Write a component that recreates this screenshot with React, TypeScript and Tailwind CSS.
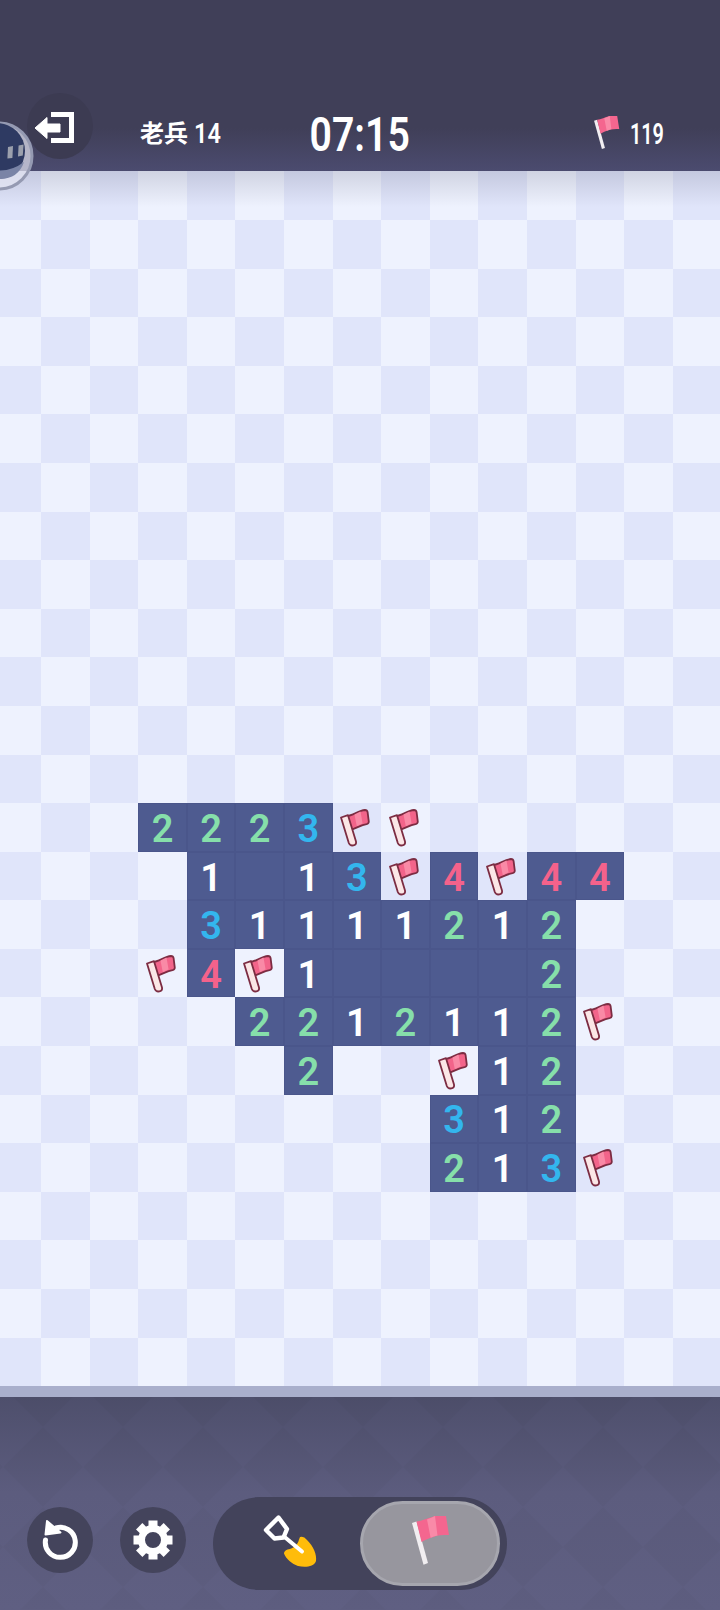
import React from 'react';

const BOARD: Record<number, string> = {
  13: '...2223FF......',
  14: '....1013F4F44..',
  15: '....31111212...',
  16: '...F4F100002...',
  17: '.....2212112F..',
  18: '......2..F12...',
  19: '.........312...',
  20: '.........213F..',
};

const DIGIT_COLORS: Record<string, string> = {
  '1': 'text-white',
  '2': 'text-[#86dfaa]',
  '3': 'text-[#33b6ee]',
  '4': 'text-[#f4628b]',
};

// flag with dark outline, sits on the board cells
function BoardFlag() {
  return (
    <svg className="mr-[3px]" width="30" height="39" viewBox="0 0 30 39" fill="none">
      <path d="M6.5 8 C13 8 18 2.5 25 2 Q27.2 2 27.6 4.2 L28.8 13.6 Q28.8 15.8 26.6 16.2 C21 16.8 17 20 11.5 21.6 Z" fill="#f2648a" stroke="#7c2c42" strokeWidth="1.8" strokeLinejoin="round" />
      <path d="M14.5 6.6 C16.5 5.6 18.5 4.4 20.5 3.6 L22.6 15.4 C20.6 16 18.6 17.2 16.8 18.2 Z" fill="#f98aa6" />
      <path d="M1 9.5 L8 7.2 L16 33.5 Q16.6 36.8 13.4 37.4 Q10 38 8.8 35 Z" fill="#fbe6e6" stroke="#7c2c42" strokeWidth="1.8" strokeLinejoin="round" />
    </svg>
  );
}

// flag without outline, used in the header and in the toggle
function PlainFlag({ width, height }: { width: number; height: number }) {
  return (
    <svg width={width} height={height} viewBox="0 0 38 50" fill="none">
      <path d="M0 7 L4.5 5.5 L16 47 L11.5 48.7 Z" fill="#f1eef1" />
      <path d="M4.5 5.5 C10 5 16 2 23 0 L34 0 L37 19 C31 19 26 19 21 21 C17 22 13 24 9.5 26 Z" fill="#f4668f" />
      <path d="M15 3.4 C18 2.4 21 1 23 0 L25.5 19.4 C23 19.8 20.5 21 18.6 21.8 Z" fill="#f98aa8" />
    </svg>
  );
}

function ExitIcon() {
  return (
    <svg width="66" height="66" viewBox="0 0 66 66" fill="none">
      <path d="M24 21.5 H44.5 V47.5 H24" stroke="#fff" strokeWidth="5" />
      <path d="M8 35 L20 24.5 V31 H33 V39 H20 V45.5 Z" fill="#fff" stroke="#fff" strokeWidth="1" strokeLinejoin="round" />
    </svg>
  );
}

function UndoIcon() {
  return (
    <svg width="66" height="66" viewBox="0 0 66 66" fill="none">
      <path d="M29 21 A 15 15 0 1 1 18.5 33" stroke="#fff" strokeWidth="5" strokeLinecap="round" />
      <path d="M20 14 L18.5 27.5 L33.5 25.5 Z" fill="#fff" stroke="#fff" strokeWidth="2" strokeLinejoin="round" />
    </svg>
  );
}

function GearIcon() {
  return (
    <svg width="66" height="66" viewBox="0 0 66 66" fill="none">
      <circle cx="33" cy="33" r="11.5" stroke="#fff" strokeWidth="7" />
      {[0, 45, 90, 135, 180, 225, 270, 315].map((deg) => (
        <rect key={deg} x="28.5" y="13.5" width="9" height="8" fill="#fff" transform={`rotate(${deg} 33 33)`} />
      ))}
    </svg>
  );
}

function ShovelIcon() {
  return (
    <svg width="80" height="70" viewBox="0 0 80 70" fill="none">
      <path d="M47 32 Q50.5 30.5 54 35 C60.5 41 64 50 63 56 C61 62 52 62.5 45 61 C39 59 33 54 31 48.5 Q31 46 34.5 44.5 C41 43.5 45 39.5 46 34.5 Z" fill="#ffbc0a" />
      <path d="M13 25 L25.5 12.5 L34 24 L30.5 32.5 L21.5 33.5 Z" stroke="#fff" strokeWidth="4.4" strokeLinejoin="round" />
      <path d="M31 31.5 L49 46.5" stroke="#fff" strokeWidth="4" strokeLinecap="round" />
    </svg>
  );
}

function FloatingBall() {
  return (
    <svg className="absolute left-0 top-[118px]" width="40" height="76" viewBox="0 0 40 76" fill="none">
      <circle cx="-1" cy="38" r="33" fill="#e4e6f2" fillOpacity="0.7" stroke="#959ab2" strokeWidth="3" />
      <circle cx="-3" cy="33" r="28" fill="#2e3a62" />
      <path d="M-10 51 Q8 56 24 44 Q18 62 -3 61 Z" fill="#7a84a6" />
      <path d="M8 29 L13 28 L12.4 40 L7.4 40.6 Z" fill="#9ba0ad" />
      <path d="M18.6 27.4 L23.6 26.6 L22.8 37.6 L18 38.4 Z" fill="#9ba0ad" />
    </svg>
  );
}

function DiamondPattern({ id }: { id: string }) {
  return (
    <svg className="absolute inset-0 h-full w-full" aria-hidden="true">
      <defs>
        <pattern id={id} width="80" height="80" patternUnits="userSpaceOnUse" x="3" y="30">
          <path d="M40 0 L80 40 L40 80 L0 40 Z" fill="#000" fillOpacity="0.025" />
        </pattern>
      </defs>
      <rect width="100%" height="100%" fill={`url(#${id})`} />
    </svg>
  );
}

function Cell({ row, col }: { row: number; col: number }) {
  const value = BOARD[row]?.[col] ?? '.';
  const dark = (row + col) % 2 === 0;
  const revealed = value !== '.' && value !== 'F';

  if (revealed) {
    return (
      <div className="flex items-center justify-center border border-[#4a568b] bg-[#4e5b90]">
        {value !== '0' && (
          <span className={`mt-[3px] text-[38px] leading-none font-semibold ${DIGIT_COLORS[value]}`}>{value}</span>
        )}
      </div>
    );
  }
  return (
    <div className={`flex items-center justify-center ${dark ? 'bg-[#e0e5fa]' : 'bg-[#eef2fe]'}`}>
      {value === 'F' && <BoardFlag />}
    </div>
  );
}

export default function App() {
  const cells = [];
  for (let row = 0; row < 25; row++) {
    for (let col = 0; col < 15; col++) {
      cells.push(<Cell key={`${row}-${col}`} row={row} col={col} />);
    }
  }

  return (
    <div className="relative flex h-[1610px] w-[720px] flex-col overflow-hidden font-['Roboto','Noto_Sans_CJK_SC',sans-serif]">
      {/* top bar */}
      <header className="relative flex h-[171.4px] shrink-0 items-start bg-[linear-gradient(180deg,#403f58_0%,#403f58_75%,#4b4b6f_100%)] pt-[93px] text-white">
        <div className="ml-[27px] flex h-[66px] w-[66px] items-center justify-center rounded-full bg-[#3c3b52]">
          <ExitIcon />
        </div>
        <div className="ml-[47px] mt-[8px] flex h-[66px] w-[90px] items-center gap-[6px]">
          <span className="text-[24px] font-bold">老兵</span>
          <span className="origin-left scale-x-[.84] text-[28px] font-semibold">14</span>
        </div>
        <div className="ml-[80px] mt-[2px] flex h-[80px] w-[100px] items-center justify-center">
          <span className="scale-x-[.8] text-[49px] font-semibold whitespace-nowrap">07:15</span>
        </div>
        <div className="ml-[184px] mt-[2px] flex h-[76px] items-center gap-[10px]">
          <PlainFlag width={26} height={34} />
          <span className="origin-left scale-x-[.66] text-[30px] font-semibold">119</span>
        </div>
      </header>

      {/* board */}
      <main className="relative h-[1215px] shrink-0">
        <div className="ml-[-7.6px] grid w-[729px] grid-cols-[repeat(15,48.6px)] auto-rows-[48.6px]">{cells}</div>
        <div className="absolute inset-x-0 top-0 h-[36px] bg-[linear-gradient(180deg,rgba(60,60,90,0.17),rgba(60,60,90,0))]" />
      </main>
      <div className="h-[11px] shrink-0 bg-[#a9afcc]" />

      {/* bottom bar */}
      <footer className="relative flex flex-1 items-start bg-[linear-gradient(180deg,#4e4f6c_0%,#5c5c7e_45%,#5f5f82_100%)] pl-[27px] pt-[100px]">
        <DiamondPattern id="footer-diamonds" />
        <button className="relative mt-[10px] flex h-[66px] w-[66px] items-center justify-center rounded-full bg-[#44445c]">
          <UndoIcon />
        </button>
        <button className="relative ml-[27px] mt-[10px] flex h-[66px] w-[66px] items-center justify-center rounded-full bg-[#44445c]">
          <GearIcon />
        </button>
        <div className="relative ml-[27px] flex h-[93px] w-[294px] items-center rounded-full bg-[#43435b] pr-[7px]">
          <div className="ml-[40px] mb-[7px]">
            <ShovelIcon />
          </div>
          <div className="mb-[1px] ml-auto flex h-[85px] w-[140px] items-center justify-center rounded-full border-[3px] border-[#a6a6ae] bg-[#97969e]">
            <div className="mb-[5px] ml-[1px]">
              <PlainFlag width={38} height={50} />
            </div>
          </div>
        </div>
      </footer>

      <FloatingBall />
    </div>
  );
}
